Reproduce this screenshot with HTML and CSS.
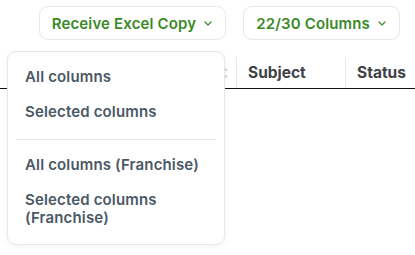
FILE: index.html
```html
<!DOCTYPE html>
<html>
<head>
<meta charset="utf-8">
<link rel="stylesheet" href="styles.css">
</head>
<body>
<div class="page">
  <div class="toolbar">
    <button class="btn">Receive Excel Copy <svg class="chev" width="8" height="5" viewBox="0 0 8 5"><path d="M1 1l3 3 3-3" fill="none" stroke="currentColor" stroke-width="1.2" stroke-linecap="round" stroke-linejoin="round"/></svg></button>
    <button class="btn">22/30 Columns <svg class="chev" width="8" height="5" viewBox="0 0 8 5"><path d="M1 1l3 3 3-3" fill="none" stroke="currentColor" stroke-width="1.2" stroke-linecap="round" stroke-linejoin="round"/></svg></button>
  </div>
  <div class="table-head">
    <div class="th th-first"><svg class="sort" width="8" height="14" viewBox="0 0 8 14"><path d="M4 1L7 5H1z M4 13L1 9h6z" fill="#d1d5db"/></svg></div>
    <div class="th">Subject</div>
    <div class="th">Status</div>
  </div>
  <div class="menu">
    <div class="group">
      <div class="item">All columns</div>
      <div class="item">Selected columns</div>
    </div>
    <div class="sep"></div>
    <div class="group">
      <div class="item">All columns (Franchise)</div>
      <div class="item">Selected columns<br>(Franchise)</div>
    </div>
  </div>
</div>
</body>
</html>
```
FILE: styles.css
```css
* { box-sizing: border-box; }
html, body { margin: 0; padding: 0; background: #fff; }
body { font-family: "Inter", sans-serif; width: 415px; height: 255px; overflow: hidden; }
.page { position: relative; }
.toolbar { display: flex; justify-content: flex-end; gap: 17px; padding: 6px 15px 0 0; }
.btn {
  height: 34px; display: flex; align-items: center; gap: 8px;
  padding: 0 13px 0 12px; background: #fff; border: 1px solid #e5e7eb; border-radius: 9px;
  font-family: "Inter", sans-serif; font-size: 15px; font-weight: 600; color: #3a8a28;
  letter-spacing: 0.15px;
}
.chev { display: block; }
.table-head {
  display: grid; grid-template-columns: 236px 109px 1fr;
  margin-top: 17px; height: 32px; border-bottom: 1px solid #111;
}
.th {
  display: flex; align-items: center; padding: 0 11px;
  font-size: 15.5px; font-weight: 700; color: #3f4347;
  border-left: 1px solid #e5e7eb;
}
.th-first { border-left: none; justify-content: flex-end; padding-right: 7px; }
.menu {
  position: absolute; left: 7px; top: 51px; width: 218px; height: 194px;
  background: #fff; border: 1px solid #e5e7eb; border-radius: 9px;
  box-shadow: 0 2px 6px rgba(0,0,0,0.05);
  font-size: 15px; font-weight: 600; color: #4a5866; letter-spacing: 0.15px;
}
.group { padding: 7px 0; }
.group:first-child { padding-bottom: 10px; }
.item { padding: 8.5px 17px; line-height: 18px; }
.sep { height: 1px; background: #e5e7eb; margin: 0 8px; }
```
